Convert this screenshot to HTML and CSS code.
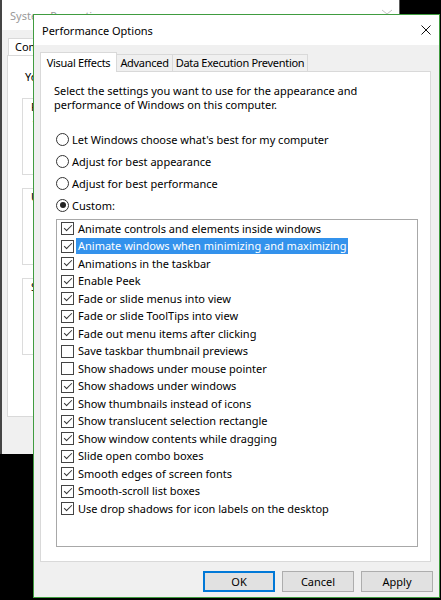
FILE: index.html
```html
<!DOCTYPE html>
<html lang="en">
<head>
    <meta charset="UTF-8">
    <meta name="viewport" content="width=device-width, initial-scale=1.0">
    <title>Performance Options</title>
    <link rel="stylesheet" href="styles.css">
</head>
<body>
    <div class="desktop">
        <!-- window behind the dialog -->
        <div class="sysprops">
            <div class="sp-title">
                <span>System Properties</span>
                <svg class="sp-chev" width="12" height="6" viewBox="0 0 12 6"><path d="M1 1l5 4 5-4" stroke="#c4c4c4" fill="none"/></svg>
            </div>
            <div class="sp-body">
                <div class="sp-tabs">
                    <div class="sp-tab">Computer Name</div>
                </div>
                <div class="sp-panel">
                    <p class="sp-note">You must be logged on as an Administrator to make most of these changes.</p>
                    <div class="sp-group">
                        <div class="sp-legend">Performance</div>
                        <p>Visual effects, processor scheduling, memory usage, and virtual memory</p>
                    </div>
                    <div class="sp-group">
                        <div class="sp-legend">User Profiles</div>
                        <p>Desktop settings related to your sign-in</p>
                    </div>
                    <div class="sp-group">
                        <div class="sp-legend">Startup and Recovery</div>
                        <p>System startup, system failure, and debugging information</p>
                    </div>
                </div>
            </div>
        </div>

        <div class="dialog">
            <div class="dlg-title">
                <span>Performance Options</span>
                <svg width="10" height="10" viewBox="0 0 10 10"><path d="M0.5 0.5L9.5 9.5M9.5 0.5L0.5 9.5" stroke="#111" stroke-width="1"/></svg>
            </div>
            <div class="dlg-body">
                <div class="tabs">
                    <div class="tab active">Visual Effects</div>
                    <div class="tab tab-adv">Advanced</div>
                    <div class="tab tab-dep">Data Execution Prevention</div>
                </div>
                <div class="panel">
                    <p class="intro">Select the settings you want to use for the appearance and<br>performance of Windows on this computer.</p>
                    <div class="radios">
                        <div class="radio"><span class="dot"></span>Let Windows choose what's best for my computer</div>
                        <div class="radio"><span class="dot"></span>Adjust for best appearance</div>
                        <div class="radio"><span class="dot"></span>Adjust for best performance</div>
                        <div class="radio"><span class="dot on"></span>Custom:</div>
                    </div>
                    <div class="listbox">
                        <div class="item"><span class="cb on"></span><span class="label">Animate controls and elements inside windows</span></div>
                        <div class="item"><span class="cb on"></span><span class="label selected">Animate windows when minimizing and maximizing</span></div>
                        <div class="item"><span class="cb on"></span><span class="label">Animations in the taskbar</span></div>
                        <div class="item"><span class="cb on"></span><span class="label">Enable Peek</span></div>
                        <div class="item"><span class="cb on"></span><span class="label">Fade or slide menus into view</span></div>
                        <div class="item"><span class="cb on"></span><span class="label">Fade or slide ToolTips into view</span></div>
                        <div class="item"><span class="cb on"></span><span class="label">Fade out menu items after clicking</span></div>
                        <div class="item"><span class="cb"></span><span class="label">Save taskbar thumbnail previews</span></div>
                        <div class="item"><span class="cb"></span><span class="label">Show shadows under mouse pointer</span></div>
                        <div class="item"><span class="cb on"></span><span class="label">Show shadows under windows</span></div>
                        <div class="item"><span class="cb on"></span><span class="label">Show thumbnails instead of icons</span></div>
                        <div class="item"><span class="cb on"></span><span class="label">Show translucent selection rectangle</span></div>
                        <div class="item"><span class="cb on"></span><span class="label">Show window contents while dragging</span></div>
                        <div class="item"><span class="cb on"></span><span class="label">Slide open combo boxes</span></div>
                        <div class="item"><span class="cb on"></span><span class="label">Smooth edges of screen fonts</span></div>
                        <div class="item"><span class="cb on"></span><span class="label">Smooth-scroll list boxes</span></div>
                        <div class="item"><span class="cb on"></span><span class="label">Use drop shadows for icon labels on the desktop</span></div>
                    </div>
                </div>
                <div class="buttons">
                    <button class="default">OK</button>
                    <button>Cancel</button>
                    <button>Apply</button>
                </div>
            </div>
        </div>
    </div>
</body>
</html>
```

FILE: styles.css
```css
body {
    margin: 0;
    background: #000;
    font-family: "Noto Sans", "Open Sans", sans-serif;
    font-size: 11px;
    color: #000;
}
p {
    margin: 0;
}
.desktop {
    position: relative;
    width: 441px;
    height: 600px;
    overflow: hidden;
}

/* System Properties (inactive, behind) */
.sysprops {
    position: absolute;
    left: 0;
    top: 0;
    width: 400px;
    height: 454px;
    box-sizing: border-box;
    border-left: 2px solid #454545;
    border-right: 1px solid #5c5c5c;
    background: #f0f0f0;
    display: flex;
    flex-direction: column;
}
.sp-title {
    height: 30px;
    flex: none;
    background: #fff;
    color: #9a9a9a;
    display: flex;
    align-items: center;
    justify-content: space-between;
    padding: 0 6px 0 8px;
}
.sp-chev {
    align-self: flex-start;
    margin-top: 9px;
}
.sp-body {
    padding: 8px 6px 0 5px;
}
.sp-tabs {
    display: flex;
    height: 17px;
}
.sp-tab {
    margin-left: 1px;
    padding: 0 6px;
    line-height: 16px;
    background: #fff;
    border: 1px solid #d9d9d9;
    border-bottom: none;
}
.sp-panel {
    height: 362px;
    box-sizing: border-box;
    background: #fff;
    border: 1px solid #d9d9d9;
    padding: 14px 10px 0 17px;
    white-space: nowrap;
}
.sp-note {
    line-height: 14px;
    margin-bottom: 14px;
}
.sp-group {
    margin-left: -3px;
    height: 77px;
    box-sizing: border-box;
    border: 1px solid #dcdcdc;
    padding: 0 8px 0 7px;
    margin-bottom: 13px;
}
.sp-legend {
    display: inline-block;
    margin-top: -8px;
    padding: 0 1px;
    background: #fff;
    line-height: 14px;
}
.sp-group p {
    margin-top: 3px;
    padding-left: 3px;
}

/* Performance Options dialog */
.dialog {
    position: absolute;
    left: 33px;
    top: 14px;
    width: 407px;
    height: 584px;
    box-sizing: border-box;
    border: 1px solid #409c40;
    background: #f0f0f0;
    display: flex;
    flex-direction: column;
}
.dlg-title {
    height: 30px;
    flex: none;
    background: #fff;
    display: flex;
    align-items: center;
    justify-content: space-between;
    padding: 0 8px 0 8px;
}
.dlg-body {
    flex: 1;
    display: flex;
    flex-direction: column;
    padding: 7px 8px 5px 6px;
}
.tabs {
    display: flex;
    align-items: flex-end;
    height: 20px;
    position: relative;
    z-index: 1;
}
.tab {
    height: 17px;
    box-sizing: border-box;
    margin-left: -1px;
    margin-bottom: 1px;
    border: 1px solid #d9d9d9;
    border-bottom: none;
    background: #f0f0f0;
    text-align: center;
    line-height: 16px;
    white-space: nowrap;
    letter-spacing: -0.3px;
}
.tab.active {
    height: 20px;
    width: 77px;
    margin: 0;
    padding-top: 1px;
    line-height: 18px;
    background: #fff;
}
.tab-adv {
    width: 57px;
}
.tab-dep {
    width: 136px;
}
.panel {
    margin-top: -1px;
    height: 491px;
    box-sizing: border-box;
    background: #fff;
    border: 1px solid #d9d9d9;
    padding: 12px 12px 0 15px;
}
.intro {
    margin-left: -2px;
    line-height: 14px;
}
.radios {
    margin-top: 16px;
}
.radio {
    height: 22px;
    display: flex;
    align-items: center;
    gap: 3px;
}
.dot {
    width: 13px;
    height: 13px;
    box-sizing: border-box;
    border: 1px solid #333;
    border-radius: 50%;
    display: flex;
    align-items: center;
    justify-content: center;
}
.dot.on::after {
    content: "";
    width: 6px;
    height: 6px;
    border-radius: 50%;
    background: #222;
}
.listbox {
    margin-top: 3px;
    width: 362px;
    height: 328px;
    box-sizing: border-box;
    border: 1px solid #a8a8a8;
    padding-left: 4px;
}
.item {
    height: 17.5px;
    display: flex;
    align-items: center;
    gap: 2px;
}
.cb {
    position: relative;
    flex: none;
    width: 13px;
    height: 13px;
    box-sizing: border-box;
    border: 1px solid #444;
    background: #fff;
}
.cb.on::after {
    content: "";
    position: absolute;
    left: 4px;
    top: 0;
    width: 3px;
    height: 7px;
    border: solid #333;
    border-width: 0 1px 1px 0;
    transform: rotate(45deg);
}
.label {
    padding: 0 2px;
    line-height: 16px;
}
.label.selected {
    background: #3392ec;
    color: #fff;
}
.buttons {
    display: flex;
    justify-content: flex-end;
    gap: 7px;
    margin: 9px -2px 0 0;
}
button {
    width: 72px;
    height: 21px;
    padding: 0;
    font: inherit;
    color: #000;
    background: #e1e1e1;
    border: 1px solid #adadad;
}
button.default {
    border-color: #0078d7;
    box-shadow: inset 0 0 0 1px #0078d7;
}
```
